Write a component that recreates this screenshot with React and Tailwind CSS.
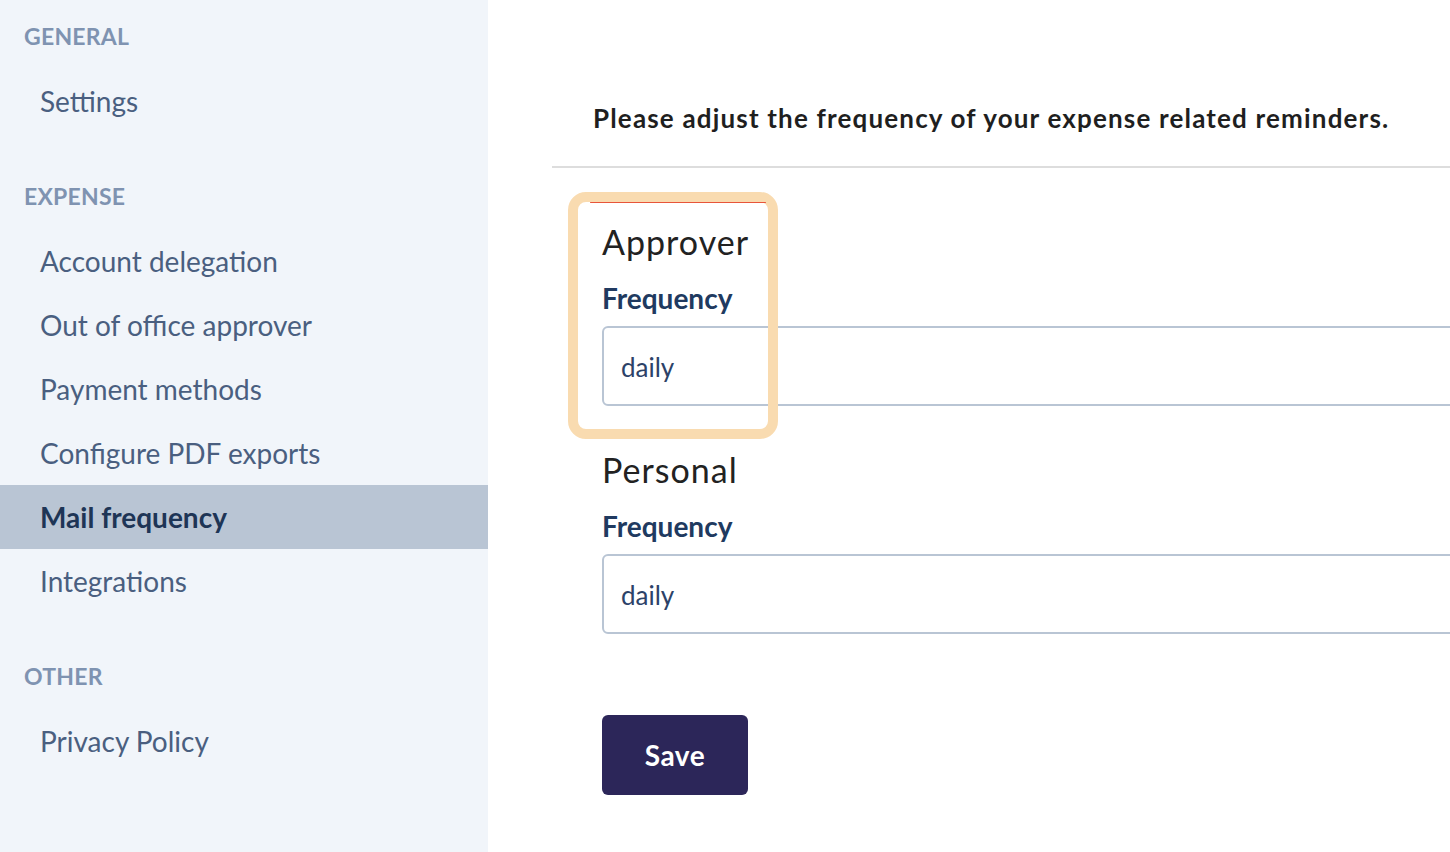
import React from "react";

const font = { fontFamily: "Lato, 'Noto Sans', sans-serif" };

function Section({ label, items, active, last }) {
  return (
    <div className={last ? "" : "mb-[51px]"}>
      <div className="h-6 px-6 text-[23px] leading-6 font-bold uppercase text-[#7f93b1] tracking-[0.01em]">
        {label}
      </div>
      <div className="mt-[21px] flex flex-col">
        {items.map((it) => (
          <div
            key={it}
            className={
              "h-16 flex items-center pl-10 text-[28px] " +
              (it === active
                ? "bg-[#b9c5d4] font-bold text-[#1e3556]"
                : "text-[#4a5f80]")
            }
          >
            {it}
          </div>
        ))}
      </div>
    </div>
  );
}

function Field({ title, value }) {
  return (
    <div className="flex flex-col">
      <div className="text-[34px] leading-[40px] text-[#222222] h-[40px] tracking-[0.03em]">{title}</div>
      <div className="mt-[20px] text-[28px] leading-[32px] font-bold text-[#203a60]">Frequency</div>
      <div className="mt-[12px] h-[80px] w-[900px] border-2 border-[#b9c5d4] rounded-[6px] bg-white flex items-center pl-[17px] pt-[3px] text-[26px] text-[#2c4268]">
        {value}
      </div>
    </div>
  );
}

export default function App() {
  return (
    <div className="w-[1450px] h-[852px] flex overflow-hidden bg-white" style={font}>
      <aside className="w-[488px] shrink-0 h-full bg-[#f1f5fa] pt-6">
        <Section label="General" items={["Settings"]} />
        <Section
          label="Expense"
          items={[
            "Account delegation",
            "Out of office approver",
            "Payment methods",
            "Configure PDF exports",
            "Mail frequency",
            "Integrations",
          ]}
          active="Mail frequency"
        />
        <Section label="Other" items={["Privacy Policy"]} last />
      </aside>
      <main className="flex-1 min-w-0 pl-16 relative">
        <div className="h-[166px] pl-[41px] pt-[101px]">
          <h1 className="text-[26px] leading-[34px] font-bold text-[#1f1f1f] whitespace-nowrap tracking-[0.045em]">
            Please adjust the frequency of your expense related reminders.
          </h1>
        </div>
        <div className="h-[2px] bg-[#dddddd]" />
        <div className="pl-[50px] pt-[54px] flex flex-col">
          <Field title="Approver" value="daily" />
          <div className="mt-[44px]">
            <Field title="Personal" value="daily" />
          </div>
          <button className="mt-[81px] w-[146px] h-[80px] rounded-[6px] bg-[#2c2659] text-white text-[28px] font-bold tracking-[0.02em]">
            Save
          </button>
        </div>
        <div className="absolute left-[80px] top-[192px] w-[210px] h-[247px] border-[10px] border-[#f9dbb0] rounded-[18px] pointer-events-none">
          <div className="absolute left-[12px] right-[2px] top-0 h-[1px] bg-[#e8553a] rounded-full" />
        </div>
      </main>
    </div>
  );
}
